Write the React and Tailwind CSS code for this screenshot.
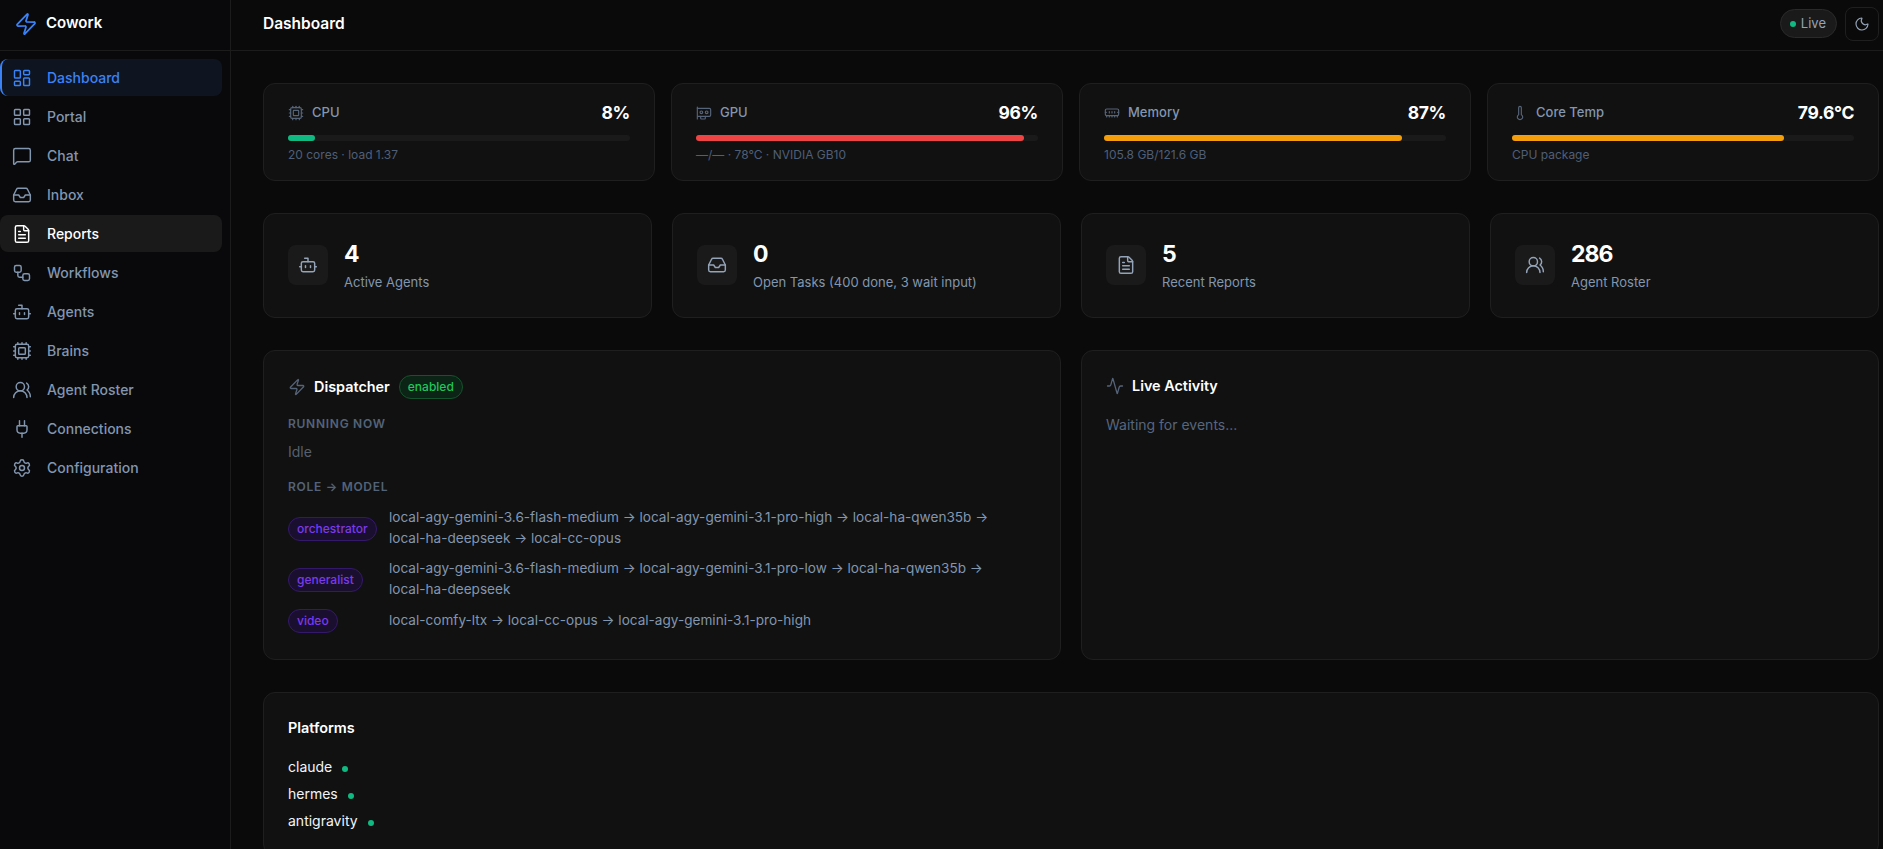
import {
  Activity,
  Bot,
  Cpu,
  FileText,
  Gpu,
  Inbox,
  LayoutDashboard,
  LayoutGrid,
  MemoryStick,
  MessageSquare,
  Moon,
  Plug,
  Settings,
  Thermometer,
  UsersRound,
  Workflow,
  Zap,
} from "lucide-react";

const navItems = [
  { label: "Dashboard", Icon: LayoutDashboard, state: "current" },
  { label: "Portal", Icon: LayoutGrid },
  { label: "Chat", Icon: MessageSquare },
  { label: "Inbox", Icon: Inbox },
  { label: "Reports", Icon: FileText, state: "hover" },
  { label: "Workflows", Icon: Workflow },
  { label: "Agents", Icon: Bot },
  { label: "Brains", Icon: Cpu },
  { label: "Agent Roster", Icon: UsersRound },
  { label: "Connections", Icon: Plug },
  { label: "Configuration", Icon: Settings },
];

const gauges = [
  { label: "CPU", Icon: Cpu, value: "8%", pct: 8, bar: "bg-[#10b981]", sub: "20 cores · load 1.37" },
  { label: "GPU", Icon: Gpu, value: "96%", pct: 96, bar: "bg-[#ef4444]", sub: "—/— · 78°C · NVIDIA GB10" },
  { label: "Memory", Icon: MemoryStick, value: "87%", pct: 87, bar: "bg-[#f59e0b]", sub: "105.8 GB/121.6 GB" },
  { label: "Core Temp", Icon: Thermometer, value: "79.6°C", pct: 79.6, bar: "bg-[#f59e0b]", sub: "CPU package" },
];

const stats = [
  { value: "4", label: "Active Agents", Icon: Bot },
  { value: "0", label: "Open Tasks (400 done, 3 wait input)", Icon: Inbox },
  { value: "5", label: "Recent Reports", Icon: FileText },
  { value: "286", label: "Agent Roster", Icon: UsersRound },
];

const roles = [
  {
    role: "orchestrator",
    chain: ["local-agy-gemini-3.6-flash-medium", "local-agy-gemini-3.1-pro-high", "local-ha-qwen35b", "local-ha-deepseek", "local-cc-opus"],
  },
  {
    role: "generalist",
    chain: ["local-agy-gemini-3.6-flash-medium", "local-agy-gemini-3.1-pro-low", "local-ha-qwen35b", "local-ha-deepseek"],
  },
  {
    role: "video",
    chain: ["local-comfy-ltx", "local-cc-opus", "local-agy-gemini-3.1-pro-high"],
  },
];

const platforms = ["claude", "hermes", "antigravity"];

function NavItem({ label, Icon, state }) {
  let tone = "border-transparent text-[#8296b0]";
  if (state === "current") tone = "border-[#3b82f6] bg-[#0e1520] text-[#3b82f6]";
  if (state === "hover") tone = "border-transparent bg-[#1a1a1a] text-white";

  return (
    <div className={`flex h-[37px] w-[222px] items-center gap-[15px] rounded-r-lg rounded-l-lg border-l-2 pl-2.5 text-[14px] font-medium ${tone}`}>
      <Icon size={20} strokeWidth={1.75} />
      <span>{label}</span>
    </div>
  );
}

function Sidebar() {
  return (
    <aside className="flex w-[231px] shrink-0 flex-col border-r border-[#1c1c1c] bg-[#09090b]">
      <div className="flex h-[51px] items-center gap-2 border-b border-[#1c1c1c] pb-[3px] pl-[14px]">
        <Zap size={24} strokeWidth={1.75} className="text-[#3b82f6]" />
        <span className="text-[15px] font-semibold text-white">Cowork</span>
      </div>
      <nav className="flex flex-col gap-0.5 pt-2">
        {navItems.map((item) => (
          <NavItem key={item.label} {...item} />
        ))}
      </nav>
    </aside>
  );
}

function Gauge({ label, Icon, value, pct, bar, sub }) {
  return (
    <div className="rounded-xl border border-[#1f1f1f] bg-[#111111] px-6 pt-4 pb-[17px]">
      <div className="flex h-[26px] items-center justify-between">
        <div className="flex items-center gap-2">
          <Icon size={16} strokeWidth={1.75} className="text-[#56647a]" />
          <span className="text-[13px] font-medium text-[#8296b0]">{label}</span>
        </div>
        <span className="text-[17.5px] font-bold tracking-[-0.02em] text-white">{value}</span>
      </div>
      <div className="mt-[9px] h-1.5 rounded-full bg-[#1a1a1a]">
        <div className={`h-full rounded-full ${bar}`} style={{ width: `${pct}%` }} />
      </div>
      <div className="mt-1.5 text-[12px] leading-4 text-[#4f5f78]">{sub}</div>
    </div>
  );
}

function StatCard({ value, label, Icon }) {
  return (
    <div className="flex items-center gap-4 rounded-xl border border-[#1f1f1f] bg-[#111111] px-6 pt-6 pb-[25px]">
      <div className="flex h-10 w-10 items-center justify-center rounded-lg bg-[#1a1a1a]">
        <Icon size={20} strokeWidth={1.75} className="text-[#94a3b8]" />
      </div>
      <div>
        <div className="text-[23px] leading-8 font-bold tracking-[-0.04em] text-white">{value}</div>
        <div className="mt-0.5 text-[13px] leading-5 text-[#8296b0]">{label}</div>
      </div>
    </div>
  );
}

function SectionLabel({ children, className }) {
  return (
    <div className={`text-[12px] leading-4 font-semibold tracking-[0.06em] text-[#536379] uppercase ${className}`}>
      {children}
    </div>
  );
}

function Dispatcher() {
  return (
    <div className="rounded-xl border border-[#1f1f1f] bg-[#111111] px-6 pt-6 pb-[26px]">
      <div className="flex h-6 items-center">
        <Zap size={18} strokeWidth={1.75} className="text-[#56647a]" />
        <span className="ml-2 text-[14.4px] font-semibold text-white">Dispatcher</span>
        <span className="ml-[9px] flex h-6 items-center rounded-full border border-[#14532d] bg-[#0c2415] px-2 text-[12px] font-medium text-[#22c55e]">
          enabled
        </span>
      </div>
      <SectionLabel className="mt-[17px]">Running now</SectionLabel>
      <div className="mt-2.5 text-[14px] leading-5 text-[#56606e]">Idle</div>
      <SectionLabel className="mt-[17px]">Role → Model</SectionLabel>
      <div className="mt-3 flex flex-col gap-[9px]">
        {roles.map((r) => (
          <div key={r.role} className="flex items-center last:-mt-0.5">
            <div className="w-[101px] shrink-0">
              <span className="inline-flex h-6 items-center rounded-full border border-[#34196b] bg-[#1a0f2e] px-2 text-[12px] font-medium text-[#7c3aed]">
                {r.role}
              </span>
            </div>
            <div className="text-[13.6px] leading-[21px] text-[#8296b0]">
              {r.chain.map((model, i) => (
                <span key={model}>
                  <span className="whitespace-nowrap">{model}</span>
                  {i < r.chain.length - 1 && " → "}
                </span>
              ))}
            </div>
          </div>
        ))}
      </div>
    </div>
  );
}

function LiveActivity() {
  return (
    <div className="rounded-xl border border-[#1f1f1f] bg-[#111111] p-6">
      <div className="flex h-[22px] items-center">
        <Activity size={18} strokeWidth={1.75} className="text-[#56647a]" />
        <span className="ml-2 text-[14.4px] font-semibold text-white">Live Activity</span>
      </div>
      <div className="mt-[18px] text-[14px] leading-5 text-[#56667f]">Waiting for events...</div>
    </div>
  );
}

function Platforms() {
  return (
    <div className="rounded-xl border border-[#1f1f1f] bg-[#111111] p-6">
      <div className="text-[14.4px] leading-[22px] font-semibold text-white">Platforms</div>
      <div className="mt-[18px] flex flex-col gap-[7px]">
        {platforms.map((p) => (
          <div key={p} className="flex items-center gap-2.5 text-[14px] leading-5 text-[#f1f5f9]">
            <span>{p}</span>
            <span className="mt-[3px] h-1.5 w-1.5 rounded-full bg-[#10b981]" />
          </div>
        ))}
      </div>
    </div>
  );
}

export default function App() {
  return (
    <div className="flex h-screen overflow-hidden bg-[#0a0a0a] font-['Inter',sans-serif]">
      <Sidebar />
      <div className="flex min-w-0 flex-1 flex-col">
        <header className="flex h-[51px] shrink-0 items-center justify-between border-b border-[#1c1c1c] pr-1 pb-[3px] pl-8">
          <h1 className="text-[15.5px] font-semibold text-white">Dashboard</h1>
          <div className="flex items-center gap-2">
            <div className="flex h-[29px] items-center gap-[5px] rounded-full border border-[#2a2a2a] bg-[#1a1a1a] pr-2.5 pl-[9px] text-[13px] text-[#94a3b8]">
              <span className="h-1.5 w-1.5 rounded-full bg-[#10b981]" />
              Live
            </div>
            <button className="flex h-[34px] w-[34px] items-center justify-center rounded-lg border border-[#1f1f1f] text-[#94a3b8]">
              <Moon size={16} strokeWidth={1.75} />
            </button>
          </div>
        </header>
        <main className="flex flex-col gap-8 pt-8 pr-1 pl-8">
          <div className="grid grid-cols-4 gap-4">
            {gauges.map((g) => (
              <Gauge key={g.label} {...g} />
            ))}
          </div>
          <div className="grid grid-cols-4 gap-5">
            {stats.map((s) => (
              <StatCard key={s.label} {...s} />
            ))}
          </div>
          <div className="grid grid-cols-2 gap-5">
            <Dispatcher />
            <LiveActivity />
          </div>
          <Platforms />
        </main>
      </div>
    </div>
  );
}
